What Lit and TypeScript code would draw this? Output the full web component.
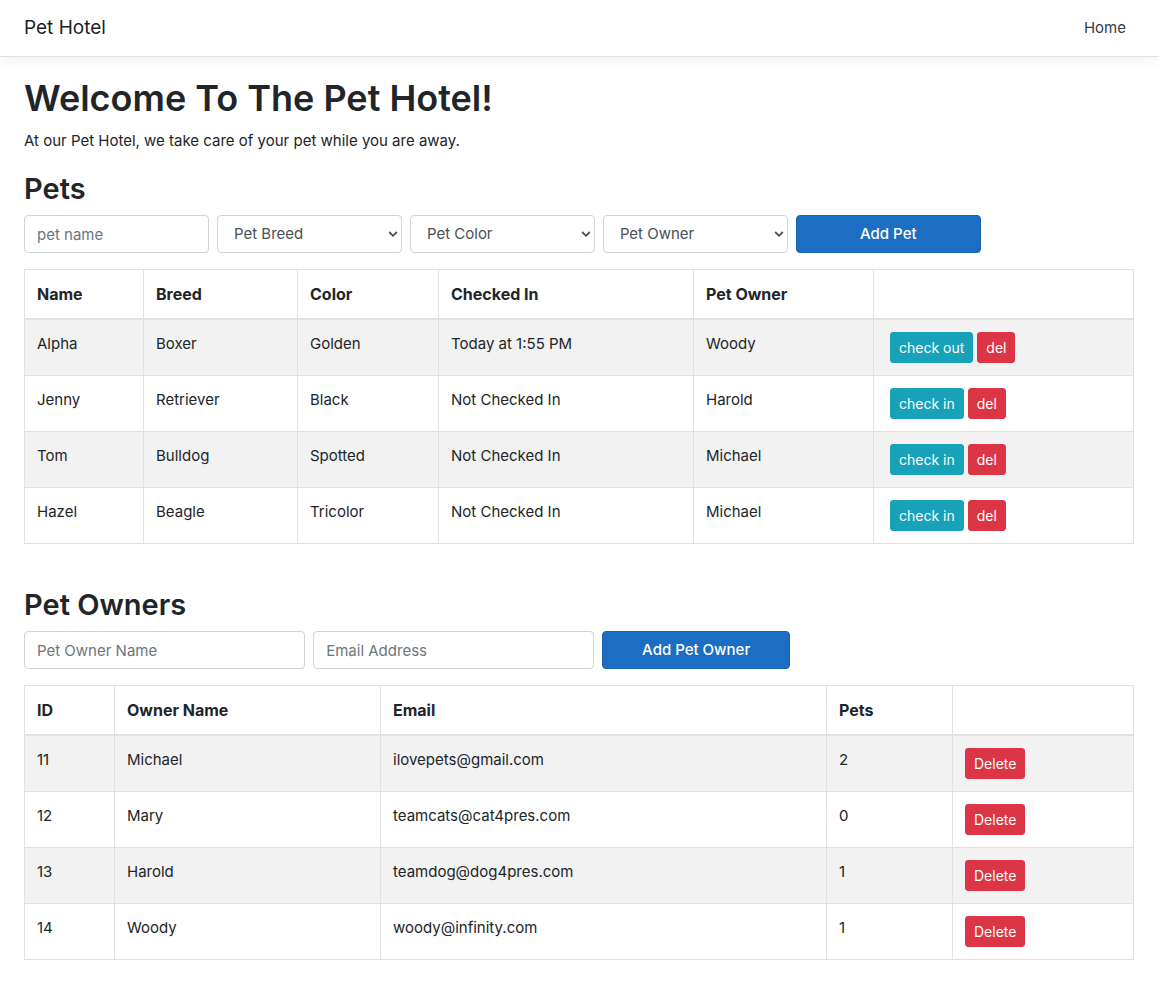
import { LitElement, html, css, svg } from "lit";
import { customElement, property } from "lit/decorators.js";

interface Pet {
  name: string;
  breed: string;
  color: string;
  checkedIn: string | null;
  owner: string;
}

interface Owner {
  id: number;
  name: string;
  email: string;
  pets: number;
}

interface Column {
  label: string;
  weight: number;
}

const controls = css`
  *,
  *::before,
  *::after {
    box-sizing: border-box;
  }
  :host {
    display: block;
  }
  .heading {
    margin: 0 0 6px;
    font-size: 29px;
    font-weight: 600;
    line-height: 40px;
  }
  .form {
    display: grid;
    gap: 8px;
    margin: 0 0 16px;
  }
  .control {
    display: block;
    width: 100%;
    height: 38px;
    padding: 6px 12px;
    border: 1px solid #ced4da;
    border-radius: 4px;
    background: #fff;
    color: #495057;
    font: inherit;
  }
  .control::placeholder {
    color: #6c757d;
    opacity: 1;
  }
  .submit {
    height: 38px;
    padding: 6px 12px;
    border: 1px solid #1861ac;
    border-radius: 4px;
    background: #1b6ec2;
    color: #fff;
    font: inherit;
    font-weight: 500;
    cursor: pointer;
  }
  .table {
    width: 100%;
    table-layout: fixed;
    border-collapse: collapse;
    border: 1px solid #dee2e6;
  }
  .table th,
  .table td {
    padding: 12px;
    border: 1px solid #dee2e6;
    text-align: left;
    vertical-align: top;
  }
  .table thead th {
    border-bottom-width: 2px;
    font-size: 16px;
    font-weight: 700;
  }
  .table tbody tr:nth-child(odd) {
    background: rgba(0, 0, 0, 0.05);
  }
  .actions {
    display: flex;
    gap: 4px;
  }
  .small {
    height: 31px;
    padding: 4px 8px;
    border: 1px solid transparent;
    border-radius: 3px;
    color: #fff;
    font: inherit;
    font-size: 14px;
    line-height: 21px;
    white-space: nowrap;
    cursor: pointer;
  }
  .info {
    border-color: #17a2b8;
    background: #17a2b8;
  }
  .danger {
    border-color: #dc3545;
    background: #dc3545;
  }
`;

function tableHead(columns: Column[]) {
  const total = columns.reduce((sum, c) => sum + c.weight, 0);
  return html`
    <colgroup>
      ${columns.map((c) => html`<col style="width: ${(c.weight / total) * 100}%" />`)}
    </colgroup>
    <thead>
      <tr>
        ${columns.map((c) => html`<th scope="col">${c.label}</th>`)}
      </tr>
    </thead>
  `;
}

@customElement("pet-select")
export class PetSelect extends LitElement {
  @property() label = "";
  @property({ attribute: false }) options: string[] = [];

  static styles = [
    controls,
    css`
      .wrap {
        position: relative;
      }
      .select {
        appearance: none;
        padding: 6px 20px 6px 16px;
      }
      .arrow {
        position: absolute;
        top: 15px;
        right: 4px;
        width: 10px;
        height: 8px;
        pointer-events: none;
      }
    `,
  ];

  render() {
    return html`
      <div class="wrap">
        <select class="control select" aria-label=${this.label}>
          <option value="">${this.label}</option>
          ${this.options.map((o) => html`<option>${o}</option>`)}
        </select>
        <svg class="arrow" viewBox="0 0 10 8" aria-hidden="true">
          ${svg`<path d="M1.2 2 L5 5.8 L8.8 2" fill="none" stroke="#495057" stroke-width="1.8" />`}
        </svg>
      </div>
    `;
  }
}

@customElement("pet-section")
export class PetSection extends LitElement {
  @property({ attribute: false }) pets: Pet[] = [];
  @property({ attribute: false }) owners: Owner[] = [];

  private columns: Column[] = [
    { label: "Name", weight: 119 },
    { label: "Breed", weight: 154 },
    { label: "Color", weight: 141 },
    { label: "Checked In", weight: 255 },
    { label: "Pet Owner", weight: 180 },
    { label: "", weight: 260 },
  ];

  static styles = [
    controls,
    css`
      .form {
        width: 86.2%;
        grid-template-columns: repeat(5, minmax(0, 1fr));
      }
      .actions {
        padding-left: 4px;
      }
    `,
  ];

  render() {
    return html`
      <h2 class="heading">Pets</h2>
      <form class="form" @submit=${(e: Event) => e.preventDefault()}>
        <input class="control" type="text" placeholder="pet name" aria-label="pet name" />
        <pet-select label="Pet Breed" .options=${["Boxer", "Retriever", "Bulldog", "Beagle"]}></pet-select>
        <pet-select label="Pet Color" .options=${["Golden", "Black", "Spotted", "Tricolor"]}></pet-select>
        <pet-select label="Pet Owner" .options=${this.owners.map((o) => o.name)}></pet-select>
        <button class="submit" type="submit">Add Pet</button>
      </form>
      <table class="table">
        ${tableHead(this.columns)}
        <tbody>
          ${this.pets.map(
            (p) => html`
              <tr>
                <td>${p.name}</td>
                <td>${p.breed}</td>
                <td>${p.color}</td>
                <td>${p.checkedIn ?? "Not Checked In"}</td>
                <td>${p.owner}</td>
                <td>
                  <div class="actions">
                    <button class="small info" type="button">${p.checkedIn ? "check out" : "check in"}</button>
                    <button class="small danger" type="button">del</button>
                  </div>
                </td>
              </tr>
            `
          )}
        </tbody>
      </table>
    `;
  }
}

@customElement("owner-section")
export class OwnerSection extends LitElement {
  @property({ attribute: false }) owners: Owner[] = [];

  private columns: Column[] = [
    { label: "ID", weight: 90 },
    { label: "Owner Name", weight: 266 },
    { label: "Email", weight: 446 },
    { label: "Pets", weight: 126 },
    { label: "", weight: 181 },
  ];

  static styles = [
    controls,
    css`
      .form {
        width: 69%;
        grid-template-columns: minmax(0, 3fr) minmax(0, 3fr) minmax(0, 2fr);
      }
    `,
  ];

  render() {
    return html`
      <h2 class="heading">Pet Owners</h2>
      <form class="form" @submit=${(e: Event) => e.preventDefault()}>
        <input class="control" type="text" placeholder="Pet Owner Name" aria-label="Pet Owner Name" />
        <input class="control" type="email" placeholder="Email Address" aria-label="Email Address" />
        <button class="submit" type="submit">Add Pet Owner</button>
      </form>
      <table class="table">
        ${tableHead(this.columns)}
        <tbody>
          ${this.owners.map(
            (o) => html`
              <tr>
                <td>${o.id}</td>
                <td>${o.name}</td>
                <td>${o.email}</td>
                <td>${o.pets}</td>
                <td>
                  <div class="actions">
                    <button class="small danger" type="button">Delete</button>
                  </div>
                </td>
              </tr>
            `
          )}
        </tbody>
      </table>
    `;
  }
}

@customElement("app-root")
export class AppRoot extends LitElement {
  private pets: Pet[] = [
    { name: "Alpha", breed: "Boxer", color: "Golden", checkedIn: "Today at 1:55 PM", owner: "Woody" },
    { name: "Jenny", breed: "Retriever", color: "Black", checkedIn: null, owner: "Harold" },
    { name: "Tom", breed: "Bulldog", color: "Spotted", checkedIn: null, owner: "Michael" },
    { name: "Hazel", breed: "Beagle", color: "Tricolor", checkedIn: null, owner: "Michael" },
  ];

  private owners: Owner[] = [
    { id: 11, name: "Michael", email: "ilovepets@gmail.com", pets: 2 },
    { id: 12, name: "Mary", email: "teamcats@cat4pres.com", pets: 0 },
    { id: 13, name: "Harold", email: "teamdog@dog4pres.com", pets: 1 },
    { id: 14, name: "Woody", email: "woody@infinity.com", pets: 1 },
  ];

  static styles = css`
    :host {
      display: block;
      min-height: 100vh;
      background: #fff;
      color: #212529;
      font-family: Inter, "Liberation Sans", sans-serif;
      font-size: 15px;
      line-height: 24px;
    }
    .navbar {
      display: flex;
      align-items: center;
      justify-content: space-between;
      padding: 8px 25px 8px 24px;
      border-bottom: 1px solid #dee2e6;
      box-shadow: 0 4px 12px rgba(0, 0, 0, 0.05);
    }
    .brand {
      color: rgba(0, 0, 0, 0.9);
      font-size: 19px;
      line-height: 30px;
      text-decoration: none;
    }
    .link {
      padding: 8px;
      color: #343a40;
      text-decoration: none;
    }
    .main {
      display: block;
      padding: 16px 25px 24px 24px;
    }
    .title {
      margin: 0 0 6px;
      font-size: 36px;
      font-weight: 600;
      line-height: 50px;
    }
    .lead {
      margin: 0 0 16px;
    }
    .owners {
      margin-top: 41px;
    }
  `;

  render() {
    return html`
      <header>
        <nav class="navbar">
          <a class="brand" href="#">Pet Hotel</a>
          <a class="link" href="#">Home</a>
        </nav>
      </header>
      <main class="main">
        <h1 class="title">Welcome To The Pet Hotel!</h1>
        <p class="lead">At our Pet Hotel, we take care of your pet while you are away.</p>
        <pet-section .pets=${this.pets} .owners=${this.owners}></pet-section>
        <owner-section class="owners" .owners=${this.owners}></owner-section>
      </main>
    `;
  }
}
